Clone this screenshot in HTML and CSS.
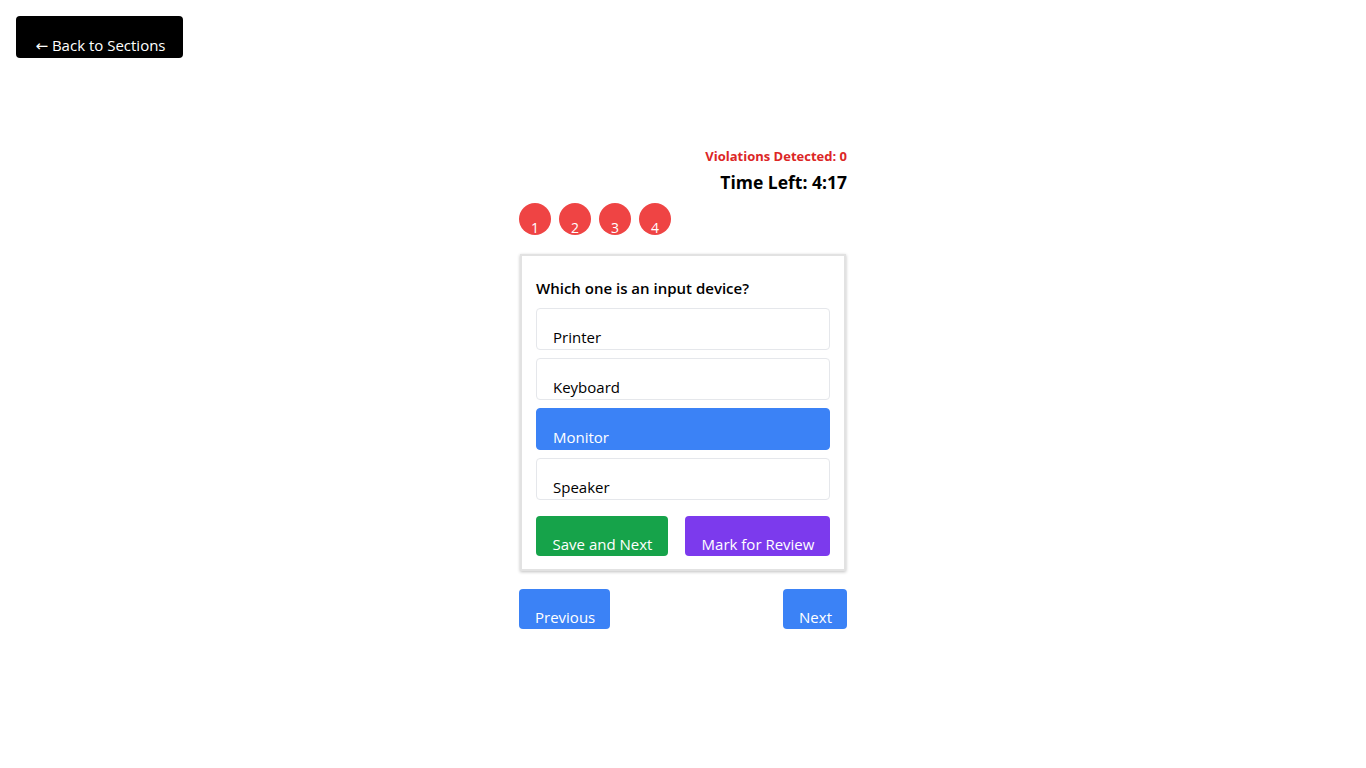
FILE: index.html
```html
<!DOCTYPE html>
<html>
<head>
<meta charset="utf-8">
<link rel="stylesheet" href="styles.css">
</head>
<body>
<div class="top">
  <button class="back"><span class="arrow">←</span> Back to Sections</button>
</div>
<div class="wrap">
  <div class="status">
    <div class="violations">Violations Detected: 0</div>
    <div class="timer">Time Left: 4:17</div>
  </div>
  <div class="palette">
    <span class="qnum">1</span>
    <span class="qnum">2</span>
    <span class="qnum">3</span>
    <span class="qnum">4</span>
  </div>
  <div class="card">
    <div class="question">Which one is an input device?</div>
    <div class="options">
      <div class="option">Printer</div>
      <div class="option">Keyboard</div>
      <div class="option selected">Monitor</div>
      <div class="option">Speaker</div>
    </div>
    <div class="actions">
      <button class="btn save">Save and Next</button>
      <button class="btn review">Mark for Review</button>
    </div>
  </div>
  <div class="nav">
    <button class="btn blue">Previous</button>
    <button class="btn blue">Next</button>
  </div>
</div>
</body>
</html>
```
FILE: styles.css
```css
* { box-sizing: border-box; }
body {
  margin: 0;
  font-family: "Open Sans", "Noto Sans", sans-serif;
  color: #000;
  background: #fff;
}
button { font-family: inherit; border: none; cursor: pointer; }
.top { padding: 16px 16px 0; }
.back {
  background: #000;
  color: #fff;
  font-size: 15px;
  height: 42px;
  width: 167px;
  border-radius: 4px;
  padding: 16px 0 0 2px;
  line-height: 20px;
}
.arrow {
  font-family: "DejaVu Sans", sans-serif;
  font-size: 15px;
}
.wrap {
  width: 328px;
  margin: 89px auto 0;
}
.status { text-align: right; }
.violations {
  color: #dc2626;
  font-weight: 700;
  font-size: 13px;
  line-height: 18px;
}
.timer {
  font-weight: 700;
  font-size: 17.5px;
  line-height: 22px;
  margin-top: 6px;
}
.palette {
  display: flex;
  gap: 8px;
  margin-top: 10px;
}
.qnum {
  width: 32px;
  height: 32px;
  border-radius: 50%;
  background: #ef4444;
  color: #fff;
  font-size: 14px;
  display: flex;
  justify-content: center;
  align-items: flex-start;
  padding-top: 16px;
  line-height: 18px;
}
.card {
  margin: 19px 1px 0 1px;
  border: 2px solid #e2e2e2;
  box-shadow: 0 1px 3px rgba(0,0,0,0.25);
  padding: 22px 14px 13px;
}
.question {
  font-weight: 600;
  font-size: 15px;
  line-height: 20px;
}
.options {
  margin-top: 10px;
  display: flex;
  flex-direction: column;
  gap: 8px;
}
.option {
  height: 42px;
  border: 1px solid #e5e7eb;
  border-radius: 4px;
  padding: 18px 16px 0;
  font-size: 15px;
  line-height: 20px;
}
.option.selected {
  background: #3b82f6;
  border-color: #3b82f6;
  color: #fff;
}
.actions {
  display: flex;
  justify-content: space-between;
  margin-top: 16px;
}
.btn {
  height: 40px;
  border-radius: 4px;
  color: #fff;
  font-size: 15px;
  line-height: 20px;
  padding: 16px 15px 0 16px;
}
.save { background: #16a34a; width: 132px; }
.review { background: #7c3aed; width: 145px; }
.nav {
  display: flex;
  justify-content: space-between;
  margin-top: 18px;
}
.blue { background: #3b82f6; }
```
